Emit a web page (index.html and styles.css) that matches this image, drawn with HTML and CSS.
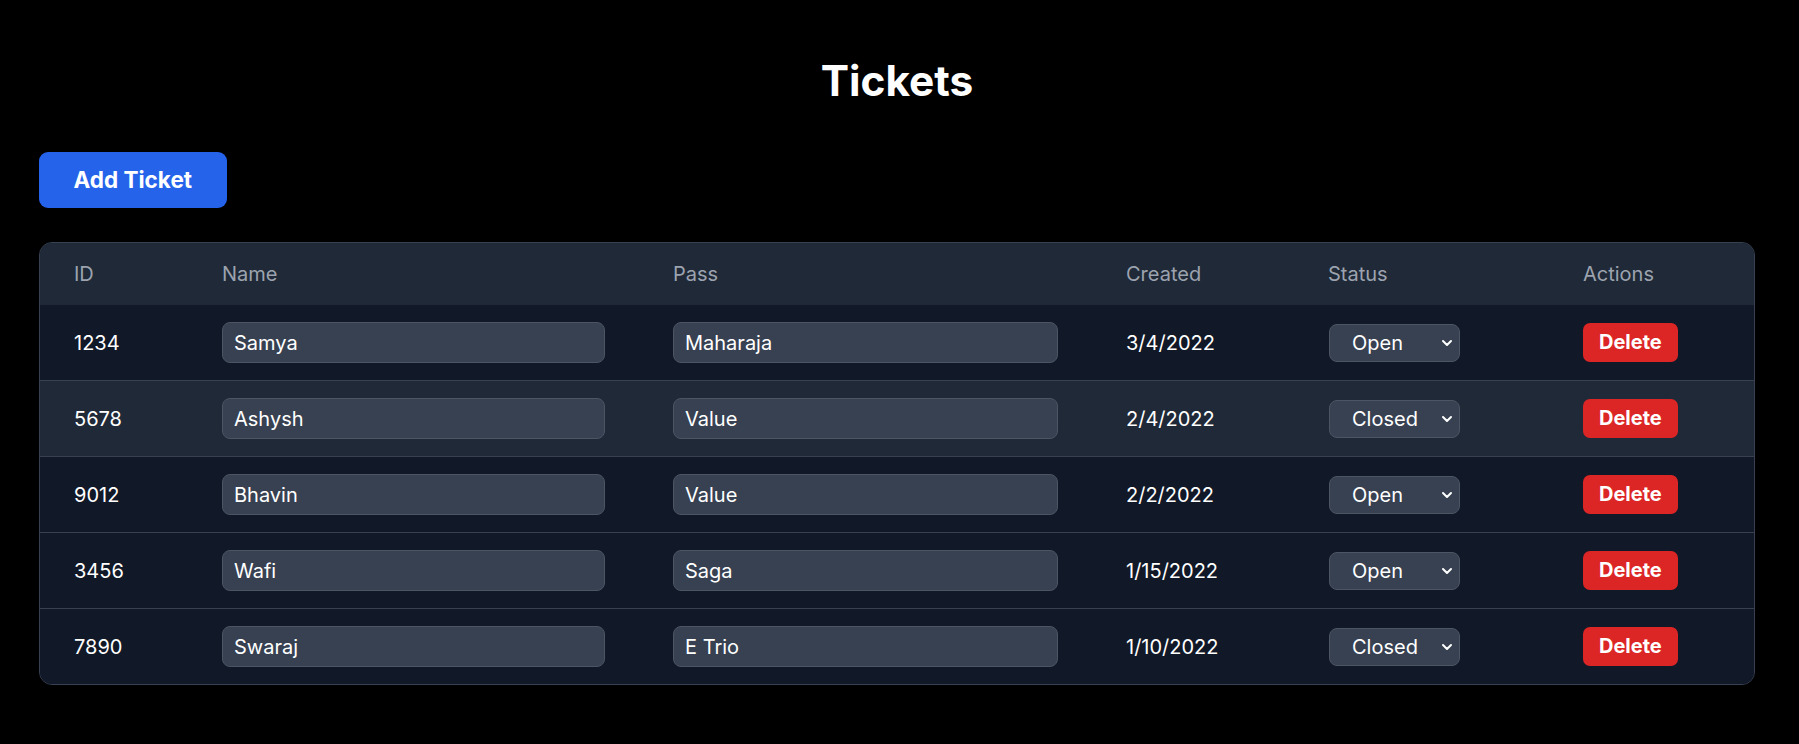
FILE: index.html
```html
<!DOCTYPE html>
<html lang="en">
<head>
<meta charset="utf-8">
<title>Tickets</title>
<link rel="stylesheet" href="styles.css">
</head>
<body>
<div class="page">
  <h1 class="title">Tickets</h1>
  <button class="add-btn">Add Ticket</button>
  <div class="table-card">
    <table class="tickets">
      <thead>
        <tr>
          <th class="c-id">ID</th>
          <th class="c-name">Name</th>
          <th class="c-pass">Pass</th>
          <th class="c-created">Created</th>
          <th class="c-status">Status</th>
          <th class="c-actions">Actions</th>
        </tr>
      </thead>
      <tbody>
        <tr>
          <td>1234</td>
          <td><input class="field" type="text" value="Samya"></td>
          <td><input class="field" type="text" value="Maharaja"></td>
          <td>3/4/2022</td>
          <td><div class="select-wrap"><select class="status"><option selected>Open</option><option>Closed</option></select><svg class="chev" width="12" height="8" viewBox="0 0 12 8"><path d="M2 2 L6 6 L10 2" fill="none" stroke="#ffffff" stroke-width="2" stroke-linecap="round" stroke-linejoin="round"/></svg></div></td>
          <td><button class="del-btn">Delete</button></td>
        </tr>
        <tr class="hover">
          <td>5678</td>
          <td><input class="field" type="text" value="Ashysh"></td>
          <td><input class="field" type="text" value="Value"></td>
          <td>2/4/2022</td>
          <td><div class="select-wrap"><select class="status"><option>Open</option><option selected>Closed</option></select><svg class="chev" width="12" height="8" viewBox="0 0 12 8"><path d="M2 2 L6 6 L10 2" fill="none" stroke="#ffffff" stroke-width="2" stroke-linecap="round" stroke-linejoin="round"/></svg></div></td>
          <td><button class="del-btn">Delete</button></td>
        </tr>
        <tr>
          <td>9012</td>
          <td><input class="field" type="text" value="Bhavin"></td>
          <td><input class="field" type="text" value="Value"></td>
          <td>2/2/2022</td>
          <td><div class="select-wrap"><select class="status"><option selected>Open</option><option>Closed</option></select><svg class="chev" width="12" height="8" viewBox="0 0 12 8"><path d="M2 2 L6 6 L10 2" fill="none" stroke="#ffffff" stroke-width="2" stroke-linecap="round" stroke-linejoin="round"/></svg></div></td>
          <td><button class="del-btn">Delete</button></td>
        </tr>
        <tr>
          <td>3456</td>
          <td><input class="field" type="text" value="Wafi"></td>
          <td><input class="field" type="text" value="Saga"></td>
          <td>1/15/2022</td>
          <td><div class="select-wrap"><select class="status"><option selected>Open</option><option>Closed</option></select><svg class="chev" width="12" height="8" viewBox="0 0 12 8"><path d="M2 2 L6 6 L10 2" fill="none" stroke="#ffffff" stroke-width="2" stroke-linecap="round" stroke-linejoin="round"/></svg></div></td>
          <td><button class="del-btn">Delete</button></td>
        </tr>
        <tr>
          <td>7890</td>
          <td><input class="field" type="text" value="Swaraj"></td>
          <td><input class="field" type="text" value="E Trio"></td>
          <td>1/10/2022</td>
          <td><div class="select-wrap"><select class="status"><option>Open</option><option selected>Closed</option></select><svg class="chev" width="12" height="8" viewBox="0 0 12 8"><path d="M2 2 L6 6 L10 2" fill="none" stroke="#ffffff" stroke-width="2" stroke-linecap="round" stroke-linejoin="round"/></svg></div></td>
          <td><button class="del-btn">Delete</button></td>
        </tr>
      </tbody>
    </table>
  </div>
</div>
</body>
</html>
```

FILE: styles.css
```css
* { box-sizing: border-box; }

html, body {
  margin: 0;
  background: #000000;
  color: #ffffff;
  font-family: Inter, "Noto Sans", "Liberation Sans", sans-serif;
}

.page {
  padding: 0 44px 40px 39px;
}

.title {
  margin: 58px 0 0;
  font-size: 42.4px;
  line-height: 46px;
  font-weight: 700;
  text-align: center;
}

.add-btn {
  display: block;
  margin: 48px 0 0;
  padding: 12px 34.5px;
  border: 0;
  border-radius: 9px;
  background: #2563eb;
  color: #ffffff;
  font-family: inherit;
  font-size: 22.5px;
  line-height: 32px;
  font-weight: 700;
}

.table-card {
  margin-top: 34px;
  border: 1px solid #374151;
  border-radius: 13px;
  overflow: hidden;
  background: #111827;
}

.tickets {
  width: 100%;
  table-layout: fixed;
  border-collapse: collapse;
  font-size: 20px;
}

.tickets th {
  background: #1f2937;
  color: #9ca3af;
  font-weight: 400;
  text-align: left;
  padding: 15px 34px;
  line-height: 32px;
}

.c-id { width: 148px; }
.c-name { width: 451px; }
.c-pass { width: 453px; }
.c-created { width: 202px; }
.c-status { width: 255px; }
.c-actions { width: 205px; }

.tickets td {
  padding: 17px 34px;
  line-height: 32px;
  vertical-align: middle;
  color: #ffffff;
}

.tickets tbody tr {
  background: #111827;
}

.tickets tbody tr + tr {
  border-top: 1px solid #374151;
}

.tickets tbody tr.hover {
  background: #1f2937;
}

.field {
  display: block;
  width: 100%;
  height: 41px;
  padding: 0 11px;
  border: 1px solid #4b5563;
  border-radius: 8px;
  background: #374151;
  color: #ffffff;
  font-family: inherit;
  font-size: 20px;
  outline: none;
}

.select-wrap {
  position: relative;
  width: 131px;
  margin-left: 1px;
}

.status {
  display: block;
  width: 131px;
  height: 38px;
  padding: 0 30px 0 22px;
  border: 1px solid #4b5563;
  border-radius: 8px;
  background: #374151;
  color: #ffffff;
  font-family: inherit;
  font-size: 20px;
  appearance: none;
  -webkit-appearance: none;
  outline: none;
}

.chev {
  position: absolute;
  right: 7px;
  top: 15px;
  pointer-events: none;
}

.del-btn {
  display: block;
  height: 39px;
  padding: 0 16px;
  border: 0;
  border-radius: 7px;
  background: #dc2626;
  color: #ffffff;
  font-family: inherit;
  font-size: 20px;
  font-weight: 700;
  line-height: 39px;
}
```
